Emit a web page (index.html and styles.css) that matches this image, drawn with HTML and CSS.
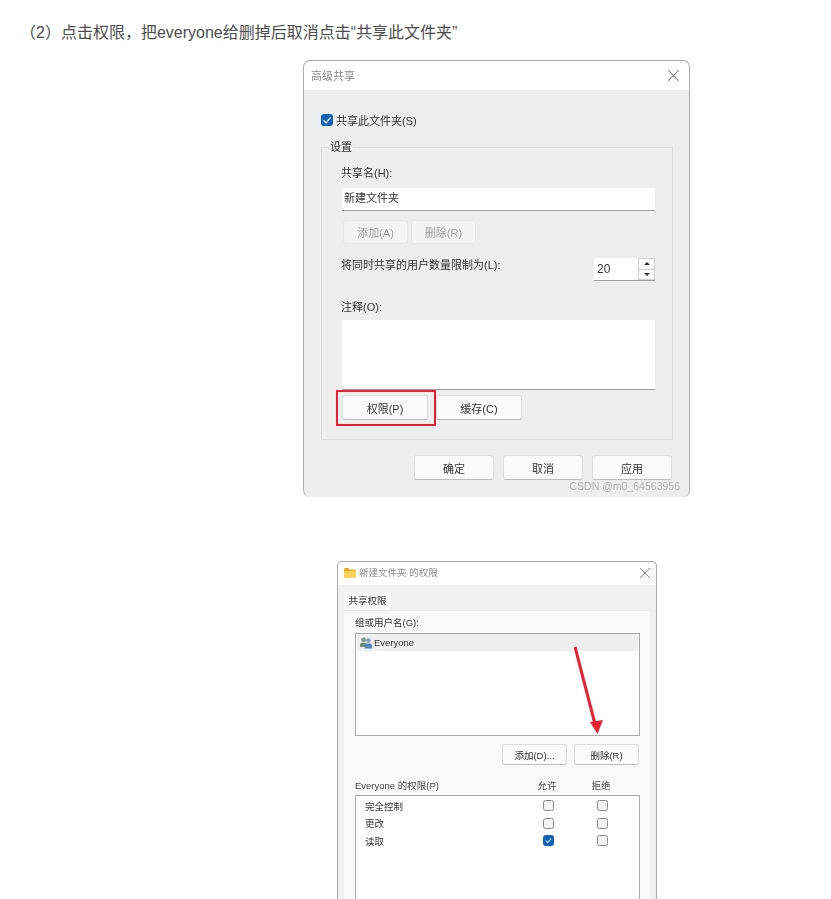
FILE: index.html
```html
<!DOCTYPE html>
<html lang="zh-CN">
<head>
  <meta charset="UTF-8" />
  <title>共享文件夹权限</title>
  <link rel="stylesheet" href="styles.css">
</head>
<body>
  <div class="article">
    <p class="step">（2）点击权限，把everyone给删掉后取消点击“共享此文件夹”</p>

    <!-- advanced sharing dialog -->
    <div class="dialog share-dialog">
      <div class="titlebar">
        <span class="title">高级共享</span>
        <svg class="close" viewBox="0 0 10 10"><path d="M0 0L10 10M10 0L0 10" /></svg>
      </div>
      <div class="share-body">
        <div class="check-row">
          <span class="check on"><svg viewBox="0 0 10 10"><path d="M2 5.2L4.2 7.4L8 2.8" /></svg></span>
          <span>共享此文件夹(S)</span>
        </div>
        <fieldset class="group">
          <legend>设置</legend>
          <div class="field-label first">共享名(H):</div>
          <div class="input">新建文件夹</div>
          <div class="btn-row top-row">
            <div class="btn disabled">添加(A)</div>
            <div class="btn disabled">删除(R)</div>
          </div>
          <div class="limit-row">
            <span class="limit-label">将同时共享的用户数量限制为(L):</span>
            <div class="spin">
              <span class="spin-value">20</span>
              <div class="spin-arrows">
                <span class="arrow-btn"><i class="tri up"></i></span>
                <span class="arrow-btn"><i class="tri down"></i></span>
              </div>
            </div>
          </div>
          <div class="field-label note-label">注释(O):</div>
          <div class="textarea"></div>
          <div class="btn-row perm-row">
            <div class="btn large">权限(P)<span class="red-box"></span></div>
            <div class="btn large">缓存(C)</div>
          </div>
        </fieldset>
        <div class="footer-row">
          <div class="btn footer-btn">确定</div>
          <div class="btn footer-btn">取消</div>
          <div class="btn footer-btn">应用</div>
        </div>
      </div>
      <span class="watermark">CSDN @m0_64563956</span>
    </div>

    <!-- folder permissions dialog -->
    <div class="dialog perm-dialog">
      <div class="titlebar small">
        <svg class="folder" viewBox="0 0 12 10">
          <path d="M0 1.2Q0 0 1.2 0H4.4L5.6 1.4H10.8Q12 1.4 12 2.6V3H0Z" fill="#e8b022" />
          <path d="M0 3H12V8.8Q12 10 10.8 10H1.2Q0 10 0 8.8Z" fill="#fbd25c" />
        </svg>
        <span class="title">新建文件夹 的权限</span>
        <svg class="close" viewBox="0 0 10 10"><path d="M0 0L10 10M10 0L0 10" /></svg>
      </div>
      <div class="perm-body">
        <div class="tab">共享权限</div>
        <div class="panel">
          <div class="panel-label">组或用户名(G):</div>
          <div class="user-list">
            <div class="user-row">
              <svg class="users" viewBox="0 0 12 12">
                <circle cx="3.6" cy="3" r="2.4" fill="#7f9a8c" />
                <path d="M0 10V7.6Q0 5.8 2 5.8H5.2Q7 5.8 7 7.6V10Z" fill="#6d8c7c" />
                <circle cx="8.4" cy="3.6" r="2.4" fill="#8aa4b8" />
                <path d="M4.6 11.5V8.6Q4.6 6.6 6.6 6.6H10Q12 6.6 12 8.6V11.5Z" fill="#4f86b8" />
              </svg>
              <span>Everyone</span>
            </div>
            <svg class="red-arrow" viewBox="0 0 30 92">
              <path d="M1 1L21 78" stroke="#e8202f" stroke-width="3" fill="none" />
              <path d="M16 76L29 74L23.5 88Z" fill="#e8202f" />
            </svg>
          </div>
          <div class="list-btns">
            <div class="btn small-btn">添加(D)...</div>
            <div class="btn small-btn">删除(R)</div>
          </div>
          <div class="perm-head">
            <span>Everyone 的权限(P)</span>
            <span class="col">允许</span>
            <span class="col">拒绝</span>
          </div>
          <div class="perm-list">
            <div class="perm-item">
              <span>完全控制</span>
              <span class="col"><i class="box"></i></span>
              <span class="col"><i class="box"></i></span>
            </div>
            <div class="perm-item">
              <span>更改</span>
              <span class="col"><i class="box"></i></span>
              <span class="col"><i class="box"></i></span>
            </div>
            <div class="perm-item">
              <span>读取</span>
              <span class="col"><i class="box on"><svg viewBox="0 0 10 10"><path d="M2 5.2L4.2 7.4L8 2.8" /></svg></i></span>
              <span class="col"><i class="box"></i></span>
            </div>
          </div>
        </div>
      </div>
    </div>
  </div>
</body>
</html>
```

FILE: styles.css
```css
* {
  box-sizing: border-box;
}

html, body {
  height: 899px;
  overflow: hidden;
}

body {
  margin: 0;
  background: #fff;
  color: #333;
  font-family: "Liberation Sans", "Noto Sans CJK SC", sans-serif;
}

.article {
  padding: 23px 0 0 20px;
}

.step {
  margin: 0;
  font-size: 16px;
  line-height: 20px;
  color: #4d4d4d;
}

.dialog {
  position: relative;
  background: #eee;
  border: 1px solid #aaa;
  border-bottom: 0;
  filter: blur(0.35px);
  font-size: 11px;
}

.share-dialog {
  width: 387px;
  height: 437px;
  margin: 17px 0 0 283px;
  border-radius: 7px;
}

.perm-dialog {
  width: 320px;
  height: 420px;
  margin: 64px 0 0 317px;
  border-radius: 5px 5px 0 0;
  background: #f0f0f0;
  font-size: 9.5px;
}

.titlebar {
  display: flex;
  align-items: center;
  height: 29px;
  padding: 0 10px 0 7px;
  background: #fff;
  border-radius: 7px 7px 0 0;
  color: #8c8c8c;
}

.titlebar.small {
  height: 23px;
  padding: 0 6px 2px 6px;
  border-radius: 5px 5px 0 0;
}

.title {
  flex: 1;
  margin-bottom: 2px;
}

.close {
  width: 11px;
  height: 11px;
  stroke: #888;
  stroke-width: 1;
  fill: none;
}

.small .close {
  width: 10px;
  height: 10px;
}

.folder {
  width: 12px;
  height: 10px;
  margin-right: 3px;
}

.share-body {
  padding: 23px 16px 0 17px;
}

.check-row {
  display: flex;
  align-items: center;
  gap: 3px;
  height: 14px;
  color: #333;
}

.check {
  width: 12px;
  height: 12px;
  border-radius: 3px;
}

.check.on, .box.on {
  background: #0f62b8;
}

.check svg, .box svg {
  display: block;
  fill: none;
  stroke: #cfe2f5;
  stroke-width: 1.2;
}

.group {
  margin: 12px 0 0;
  padding: 0 17px 19px 20px;
  border: 1px solid #dcdcdc;
  min-width: 0;
}

.group legend {
  margin-left: -13px;
  padding: 0 1px;
  line-height: 16px;
}

.field-label {
  line-height: 16px;
}

.field-label.first {
  margin-top: 10px;
  margin-left: -1px;
}

.input {
  height: 23px;
  margin-top: 7px;
  padding-left: 2px;
  background: #fff;
  border-bottom: 1px solid #a0a0a0;
  line-height: 21px;
  color: #333;
}

.btn-row {
  display: flex;
}

.top-row {
  gap: 3px;
  margin: 9px 0 0 1px;
}

.btn {
  display: flex;
  align-items: center;
  justify-content: center;
  background: #fbfbfb;
  border: 1px solid #dedede;
  border-bottom-color: #bdbdbd;
  border-radius: 3px;
  color: #333;
}

.btn.disabled {
  width: 65px;
  height: 24px;
  background: #f4f4f4;
  border-color: #e8e8e8;
  color: #a0a0a0;
}

.limit-row {
  display: flex;
  justify-content: space-between;
  margin: 14px 0 0 -1px;
}

.limit-label {
  line-height: 14px;
}

.spin {
  display: flex;
  width: 61px;
  height: 23px;
  background: #fff;
  border-bottom: 1px solid #a0a0a0;
}

.spin-value {
  flex: 1;
  padding-left: 3px;
  font-size: 12px;
  line-height: 22px;
}

.spin-arrows {
  display: flex;
  flex-direction: column;
  gap: 1px;
  width: 17px;
  padding: 1px;
  background: #d0d0d0;
}

.arrow-btn {
  display: flex;
  flex: 1;
  align-items: center;
  justify-content: center;
  background: #fbfbfb;
}

.tri {
  width: 0;
  height: 0;
  border-left: 3px solid transparent;
  border-right: 3px solid transparent;
}

.tri.up {
  border-bottom: 3px solid #333;
}

.tri.down {
  border-top: 3px solid #333;
}

.field-label.note-label {
  margin: 18px 0 0 -1px;
}

.textarea {
  height: 70px;
  margin-top: 5px;
  background: #fff;
  border-bottom: 1px solid #a0a0a0;
}

.perm-row {
  gap: 8px;
  margin: 5px 0 0;
}

.btn.large {
  position: relative;
  width: 86px;
  height: 25px;
}

.red-box {
  position: absolute;
  left: -7px;
  top: -6px;
  width: 100px;
  height: 36px;
  border: 2px solid #e8202f;
}

.footer-row {
  display: flex;
  justify-content: flex-end;
  gap: 9px;
  margin: 15px 1px 0 0;
}

.footer-btn {
  width: 80px;
  height: 25px;
}

.watermark {
  position: absolute;
  right: 9px;
  bottom: 4px;
  font-size: 10.5px;
  line-height: 14px;
  color: #b4b4b4;
}

.perm-body {
  padding: 7px 6px 0 6px;
}

.tab {
  width: 47px;
  height: 18px;
  background: #f9f9f9;
  line-height: 17px;
  text-align: center;
}

.panel {
  height: 380px;
  padding: 5px 10px 0 11px;
  background: #f9f9f9;
  border-top: 1px solid #ececec;
}

.panel-label {
  line-height: 14px;
}

.user-list {
  position: relative;
  height: 103px;
  margin-top: 3px;
  padding: 0 1px;
  background: #fff;
  border: 1px solid #a8a8a8;
}

.user-row {
  display: flex;
  align-items: center;
  gap: 2px;
  height: 17px;
  padding-left: 3px;
  background: #efefef;
}

.users {
  width: 12px;
  height: 12px;
}

.red-arrow {
  position: absolute;
  left: 218px;
  top: 12px;
  width: 30px;
  height: 92px;
}

.list-btns {
  display: flex;
  justify-content: flex-end;
  gap: 7px;
  margin-top: 8px;
  padding-right: 1px;
}

.small-btn {
  width: 65px;
  height: 21px;
}

.perm-head, .perm-item {
  display: grid;
  grid-template-columns: 1fr 54px 54px;
}

.perm-head {
  margin-top: 14px;
  padding-right: 12px;
  line-height: 14px;
  color: #444;
}

.col {
  display: flex;
  align-items: center;
  justify-content: center;
}

.perm-list {
  height: 200px;
  margin-top: 2px;
  padding: 1px 10px 0 9px;
  background: #fff;
  border: 1px solid #a8a8a8;
}

.perm-item {
  height: 17.5px;
  align-items: center;
}

.box {
  display: block;
  width: 11px;
  height: 11px;
  border: 1px solid #8a8a8a;
  border-radius: 2.5px;
  background: #f4f4f4;
}

.box.on {
  border-color: #0f62b8;
}
```
